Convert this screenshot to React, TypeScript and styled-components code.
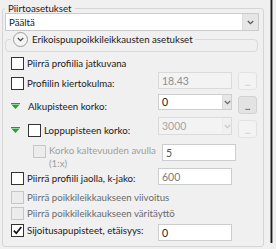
import React from "react";
import styled, { createGlobalStyle } from "styled-components";

const GlobalStyle = createGlobalStyle`
  html, body {
    margin: 0;
    padding: 0;
    background: #f0f0f0;
  }
  body {
    font-family: Lato, "Segoe UI", sans-serif;
    font-size: 9.7px;
    color: #1a1a1a;
  }
`;

const Screen = styled.div`
  width: 276px;
  height: 249px;
  display: flex;
  overflow: hidden;
  background: #f0f0f0;
`;

const Panel = styled.div`
  width: 264px;
  flex: none;
  box-sizing: border-box;
  padding: 5px 0 0 2px;
`;

const Group = styled.fieldset`
  margin: 0;
  padding: 2px 4px 4px 2px;
  min-width: 0;
  border: 1px solid #d5d5d5;
  border-radius: 3px;
`;

const Title = styled.legend`
  padding: 0 3px;
  line-height: 6px;
`;

const Select = styled.div`
  height: 18px;
  box-sizing: border-box;
  display: flex;
  align-items: stretch;
  border: 1px solid #cbcbcb;
  background: #fff;
`;

const SelectText = styled.span`
  flex: 1;
  padding-left: 3px;
  display: flex;
  align-items: center;
`;

const SelectArrow = styled.span<{ $w: number; $off?: boolean }>`
  width: ${(p) => p.$w}px;
  flex: none;
  display: flex;
  align-items: center;
  justify-content: center;
  background: ${(p) => (p.$off ? "#f0f0f0" : "#e6e6e6")};
  border-left: 1px solid ${(p) => (p.$off ? "#ececec" : "#dcdcdc")};
`;

const Expander = styled.fieldset`
  margin: 1px 1px 0 0;
  padding: 0 0 4px;
  min-width: 0;
  border: 1px solid #d9d9d9;
  border-radius: 4px;
`;

const ExpLegend = styled.legend`
  margin-left: 5px;
  padding: 0 2px;
`;

const ExpHead = styled.span`
  display: inline-flex;
  align-items: center;
  gap: 4px;
  line-height: 15px;
`;

const Circle = styled.span`
  width: 15px;
  height: 15px;
  box-sizing: border-box;
  border: 1px solid #9c9c9c;
  border-radius: 50%;
  background: #f4f4f4;
  display: flex;
  align-items: center;
  justify-content: center;
`;

const Row = styled.div<{ $h: number }>`
  display: grid;
  grid-template-columns: 1fr 74px 19px;
  column-gap: 6px;
  align-items: start;
  height: ${(p) => p.$h}px;
  padding: 0 2px 0 6px;
`;

const Label = styled.div<{ $top: number; $indent?: number; $tone?: string; $wrap?: boolean }>`
  margin-top: ${(p) => p.$top}px;
  padding-left: ${(p) => p.$indent ?? 0}px;
  display: flex;
  align-items: ${(p) => (p.$wrap ? "flex-start" : "center")};
  gap: 3px;
  line-height: ${(p) => (p.$wrap ? 13 : 14)}px;
  white-space: nowrap;
  color: ${(p) => p.$tone ?? "#1a1a1a"};
`;

const Box = styled.span<{ $off?: boolean; $nudge?: number }>`
  width: 13px;
  height: 13px;
  flex: none;
  box-sizing: border-box;
  margin-top: ${(p) => p.$nudge ?? 0}px;
  border: 1px solid ${(p) => (p.$off ? "#c6c6c6" : "#333")};
  background: ${(p) => (p.$off ? "#ececec" : "#fff")};
  display: flex;
  align-items: center;
  justify-content: center;
`;

const Marker = styled.svg`
  flex: none;
  margin-right: 5px;
`;

const Field = styled.div<{ $top: number; $h: number; $off?: boolean; $ink?: string }>`
  margin-top: ${(p) => p.$top}px;
  height: ${(p) => p.$h}px;
  box-sizing: border-box;
  display: flex;
  align-items: stretch;
  border: 1px solid ${(p) => (p.$off ? "#dadada" : "#cdcdcd")};
  background: ${(p) => (p.$off ? "#f3f3f3" : "#fff")};
  color: ${(p) => p.$ink ?? "#1a1a1a"};
  font-size: 10.5px;
`;

const FieldText = styled.span`
  flex: 1;
  padding-left: 3px;
  display: flex;
  align-items: center;
`;

const Dots = styled.div<{ $top: number; $off?: boolean }>`
  margin-top: ${(p) => p.$top}px;
  height: 18px;
  box-sizing: border-box;
  border: 1px solid ${(p) => (p.$off ? "#e2e2e2" : "#d2d2d2")};
  border-radius: 3px;
  background: ${(p) => (p.$off ? "#f3f3f3" : "#e3e3e3")};
  color: ${(p) => (p.$off ? "#c4c4c4" : "#333")};
  display: flex;
  align-items: flex-end;
  justify-content: center;
  font-size: 9px;
  line-height: 12px;
  letter-spacing: -0.5px;
`;

const Edge = styled.div`
  flex: 1;
  display: flex;
  padding-left: 6px;
`;

const Splitter = styled.div`
  width: 1px;
  height: 243px;
  background: #1c1c1c;
  border-left: 1px solid #8a8a8a;
  border-right: 1px solid #9a9a9a;
`;

const Chevron = ({ color = "#555" }: { color?: string }) => (
  <svg width="7" height="5" viewBox="0 0 7 5">
    <path d="M0.8 1 L3.5 3.6 L6.2 1" fill="none" stroke={color} strokeWidth="1.2" />
  </svg>
);

const Tick = () => (
  <svg width="11" height="11" viewBox="0 0 11 11">
    <path d="M1.8 5.6 L4.3 8.2 L9.3 2" fill="none" stroke="#111" strokeWidth="1.7" />
  </svg>
);

const Elevation = () => (
  <Marker width="9" height="6" viewBox="0 0 9 6">
    <rect x="0" y="0" width="9" height="1.2" fill="#1f9b2c" />
    <path d="M0.5 1.8 H8.5 L4.5 6 Z" fill="#22a630" />
  </Marker>
);

export default function App() {
  return (
    <Screen>
      <GlobalStyle />
      <Panel>
        <Group>
          <Title>Piirtoasetukset</Title>
          <Select>
            <SelectText>Päältä</SelectText>
            <SelectArrow $w={15}>
              <Chevron />
            </SelectArrow>
          </Select>

          <Expander>
            <ExpLegend>
              <ExpHead>
                <Circle>
                  <Chevron color="#444" />
                </Circle>
                Erikoispuupoikkileikkausten asetukset
              </ExpHead>
            </ExpLegend>
          </Expander>

          <Row $h={20}>
            <Label $top={4}>
              <Box />
              Piirrä profiilia jatkuvana
            </Label>
          </Row>

          <Row $h={21}>
            <Label $top={4}>
              <Box />
              Profiilin kiertokulma:
            </Label>
            <Field $top={0} $h={17} $off $ink="#8e8e8e">
              <FieldText>18.43</FieldText>
            </Field>
            <Dots $top={0} $off>...</Dots>
          </Row>

          <Row $h={24}>
            <Label $top={6}>
              <Elevation />
              Alkupisteen korko:
            </Label>
            <Field $top={1} $h={16}>
              <FieldText>0</FieldText>
              <SelectArrow $w={8}>
                <Chevron color="#666" />
              </SelectArrow>
            </Field>
            <Dots $top={3}>...</Dots>
          </Row>

          <Row $h={22}>
            <Label $top={6}>
              <Elevation />
              <Box />
              Loppupisteen korko:
            </Label>
            <Field $top={0} $h={18} $off $ink="#a6a6a6">
              <FieldText>3000</FieldText>
              <SelectArrow $w={8} $off>
                <Chevron color="#c8c8c8" />
              </SelectArrow>
            </Field>
            <Dots $top={3} $off>...</Dots>
          </Row>

          <Row $h={27}>
            <Label $top={5} $indent={22} $tone="#9e9e9e" $wrap>
              <Box $off $nudge={1} />
              <span>
                Korko kaltevuuden avulla
                <br />
                (1:x)
              </span>
            </Label>
            <Field $top={5} $h={17} $ink="#555">
              <FieldText>5</FieldText>
            </Field>
          </Row>

          <Row $h={20}>
            <Label $top={5}>
              <Box />
              Piirrä profiili jaolla, k-jako:
            </Label>
            <Field $top={2} $h={17} $ink="#7a7a7a">
              <FieldText>600</FieldText>
            </Field>
          </Row>

          <Row $h={18}>
            <Label $top={4} $tone="#6a6a6a">
              <Box $off />
              Piirrä poikkileikkaukseen viivoitus
            </Label>
          </Row>

          <Row $h={18}>
            <Label $top={2} $tone="#6a6a6a">
              <Box $off />
              Piirrä poikkileikkaukseen väritäyttö
            </Label>
          </Row>

          <Row $h={20}>
            <Label $top={1}>
              <Box>
                <Tick />
              </Box>
              Sijoitusapupisteet, etäisyys:
            </Label>
            <Field $top={2} $h={17}>
              <FieldText>0</FieldText>
            </Field>
          </Row>
        </Group>
      </Panel>
      <Edge>
        <Splitter />
      </Edge>
    </Screen>
  );
}
